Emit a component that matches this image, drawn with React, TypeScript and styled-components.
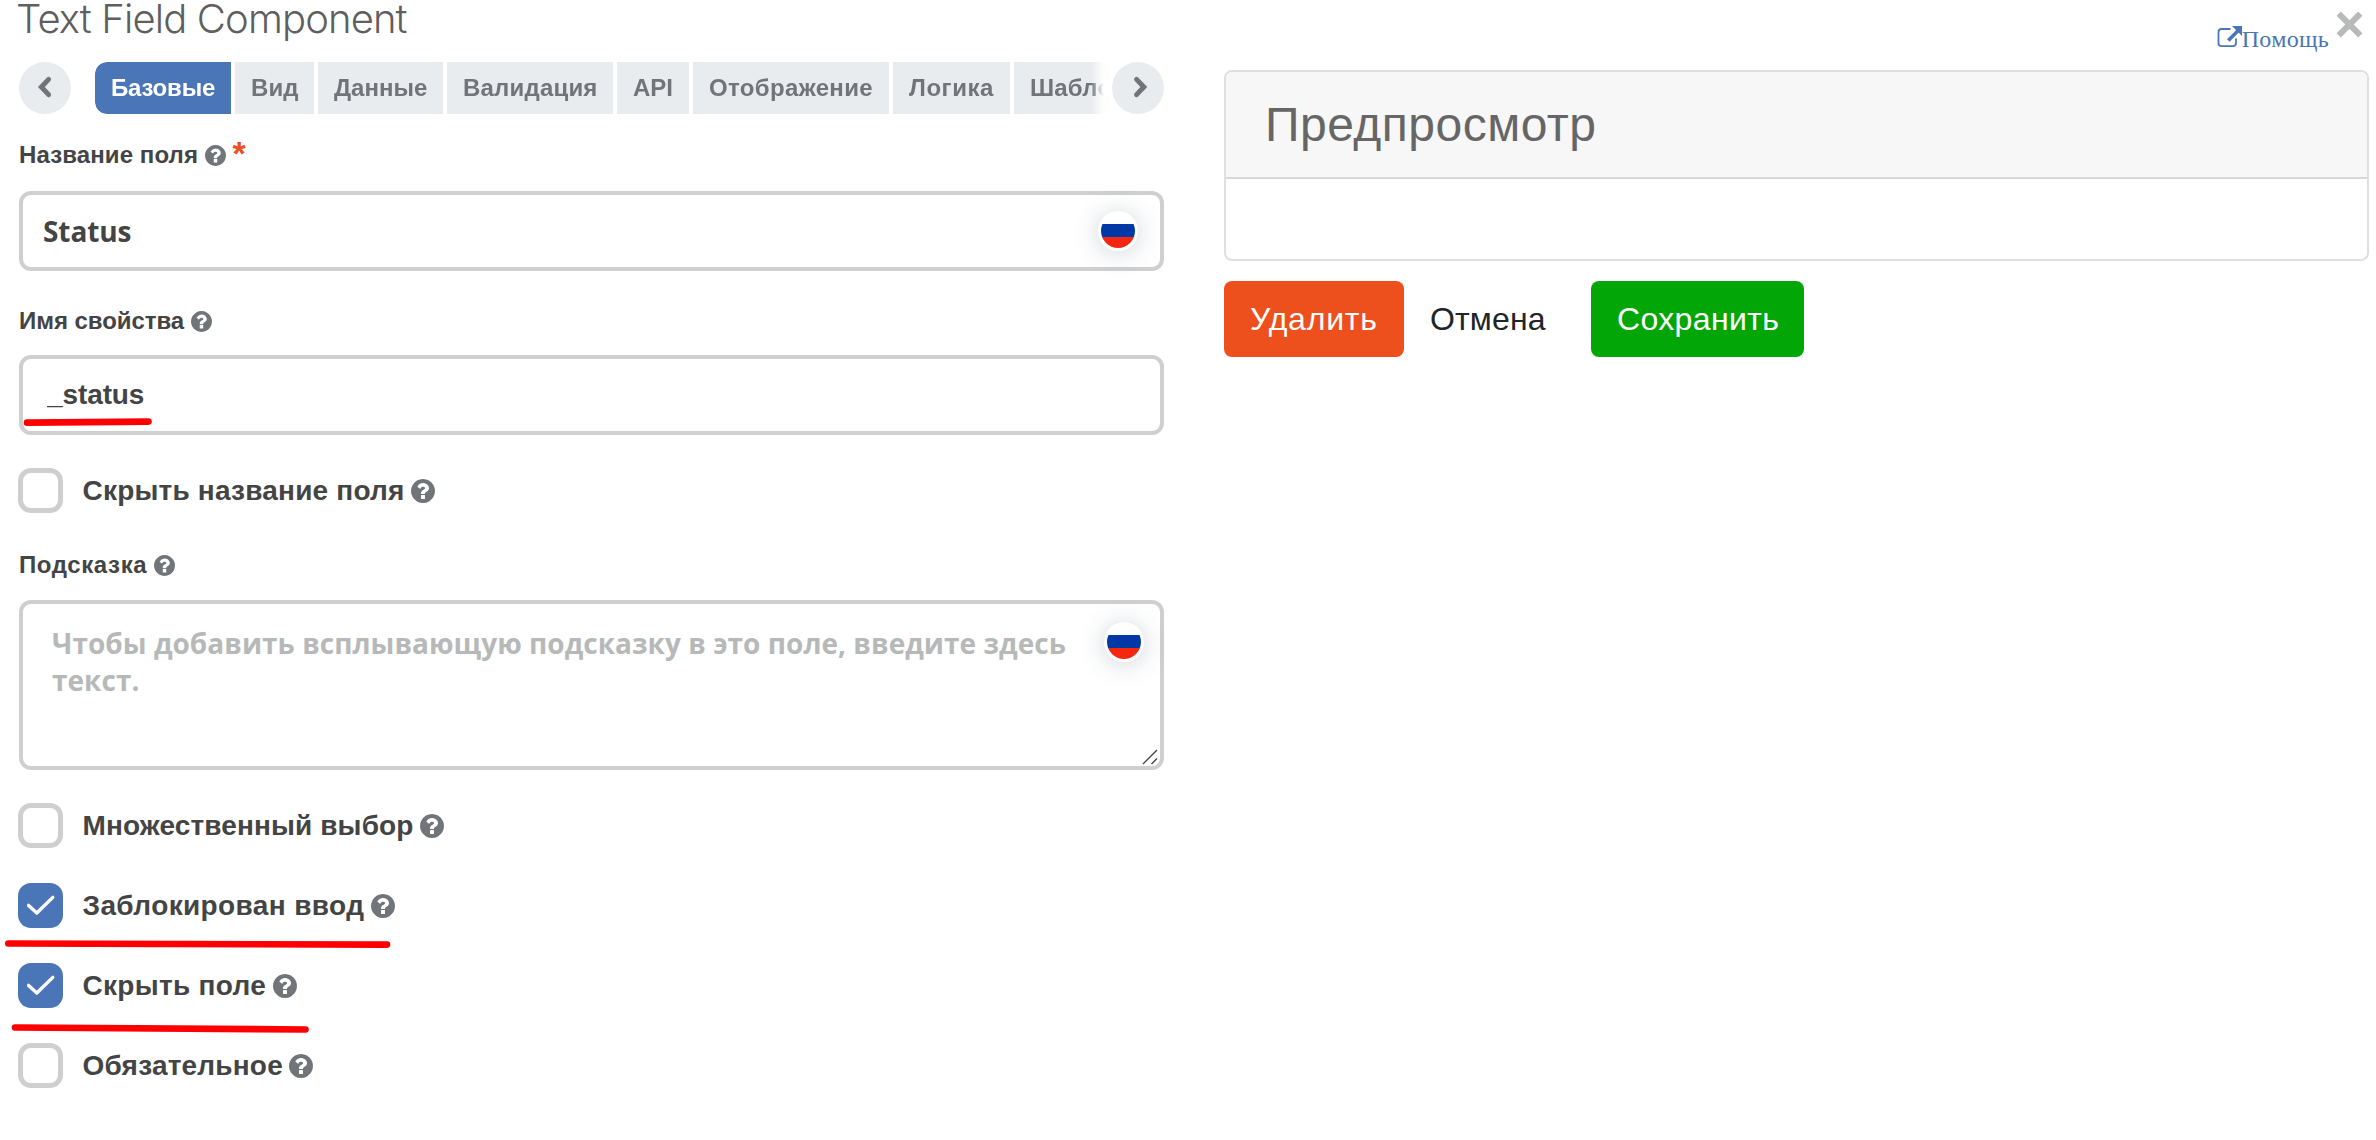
import React from 'react';
import styled, { createGlobalStyle } from 'styled-components';

const SANS = "'Liberation Sans', Arial, sans-serif";
const OPEN = "'Open Sans', 'Noto Sans', sans-serif";

const GlobalStyle = createGlobalStyle`
  *, *::before, *::after { box-sizing: border-box; }
  body {
    margin: 0;
    background: #fff;
    color: #444;
    font-family: ${SANS};
    overflow: hidden;
  }
`;

const Dialog = styled.main`
  position: relative;
  display: grid;
  grid-template-columns: 1145px 1145px;
  column-gap: 60px;
  height: 1140px;
  padding-left: 19px;
`;

const Column = styled.section`
  display: flex;
  flex-direction: column;
  min-width: 0;
`;

const Title = styled.h1`
  margin: 0 0 0 -3px;
  height: 62px;
  font: 300 40px/37px Inter, ${SANS};
  letter-spacing: -0.87px;
  color: #5f5f5f;
`;

const TabBar = styled.nav`
  display: flex;
  height: 52px;
`;

const RoundButton = styled.button`
  display: flex;
  align-items: center;
  justify-content: center;
  flex: none;
  width: 52px;
  height: 52px;
  padding: 0;
  border: 0;
  border-radius: 50%;
  background: #e9ecef;
`;

const TabStrip = styled.div`
  display: flex;
  gap: 4px;
  width: 1009px;
  margin: 0 8px 0 24px;
  overflow: hidden;
  border-radius: 12px 0 0 12px;
  mask-image: linear-gradient(to right, #000 calc(100% - 13px), transparent);
`;

const Tab = styled.button<{ $width: number; $spacing?: number; $active?: boolean }>`
  flex: none;
  width: ${(p) => p.$width}px;
  height: 52px;
  padding: 0 0 0 16px;
  border: 0;
  text-align: left;
  white-space: nowrap;
  font: bold 24px/52px ${SANS};
  letter-spacing: ${(p) => p.$spacing ?? 0}px;
  color: ${(p) => (p.$active ? '#fff' : '#717579')};
  background: ${(p) => (p.$active ? '#4a75b7' : '#e9ecef')};
`;

const FieldLabel = styled.label<{ $above: number; $below: number; $spacing?: number }>`
  display: flex;
  align-items: center;
  height: 28px;
  margin: ${(p) => p.$above}px 0 ${(p) => p.$below}px;
  font-size: 24px;
  font-weight: bold;
  line-height: 28px;
  letter-spacing: ${(p) => p.$spacing ?? 0}px;
`;

const HelpGlyph = styled.svg<{ $size: number }>`
  flex: none;
  width: ${(p) => p.$size}px;
  height: ${(p) => p.$size}px;
  margin-left: 6.5px;
  fill: #717579;
`;

const Required = styled.span`
  margin: -4px 0 0 7px;
  font-size: 34px;
  color: #eb4f1e;
`;

const Control = styled.div`
  position: relative;
  display: flex;
`;

const TextInput = styled.input<{ $font: string; $indent: number }>`
  width: 100%;
  height: 80px;
  padding: 0 80px 0 ${(p) => p.$indent}px;
  border: 4px solid #cfcfcf;
  border-radius: 12px;
  outline: 0;
  background: #fff;
  font: bold 28px ${(p) => p.$font};
  letter-spacing: -0.1px;
  color: #444;
`;

const TextArea = styled.textarea`
  width: 100%;
  height: 170px;
  padding: 21px 60px 0 29px;
  border: 4px solid #cfcfcf;
  border-radius: 12px;
  outline: 0;
  resize: none;
  overflow: hidden;
  font: bold 28px/37px ${OPEN};
  letter-spacing: 0.03px;

  &::placeholder {
    color: #b7b9b9;
    opacity: 1;
  }
`;

const ResizeGrip = styled.svg`
  position: absolute;
  right: 5px;
  bottom: 5px;
  width: 17px;
  height: 16px;
`;

const Flag = styled.span<{ $top: number; $right: number }>`
  position: absolute;
  top: ${(p) => p.$top}px;
  right: ${(p) => p.$right}px;
  width: 40px;
  height: 40px;
  padding: 3px;
  border-radius: 50%;
  background: #fff;
  box-shadow: 0 2px 24px rgba(70, 85, 105, 0.26);

  &::before {
    content: '';
    display: block;
    height: 34px;
    border-radius: 50%;
    background: linear-gradient(#fff 10px, #0039a6 10px 23.5px, #f5270e 23.5px);
  }
`;

const CheckGroup = styled.div<{ $above: number }>`
  display: flex;
  flex-direction: column;
  gap: 35px;
  margin: ${(p) => p.$above}px 0 0 -1px;
`;

const CheckRow = styled.label<{ $spacing: number }>`
  display: flex;
  align-items: center;
  height: 45px;
  font-size: 28px;
  font-weight: bold;
  line-height: 46px;
  letter-spacing: ${(p) => p.$spacing}px;
`;

const CheckBox = styled.span<{ $on?: boolean }>`
  flex: none;
  width: 45px;
  height: 45px;
  margin-right: 19.5px;
  border: ${(p) => (p.$on ? '0' : '5px solid #cfcfcf')};
  border-radius: 13px;
  background: ${(p) => (p.$on ? '#4a75b7' : '#fff')};

  svg { display: block; }
`;

const HelpRow = styled.div`
  display: flex;
  justify-content: flex-end;
  height: 70px;
  padding: 25px 40px 0 0;
`;

const HelpLink = styled.a`
  display: flex;
  height: 28px;
  font: 24px/28px 'Liberation Serif', 'Times New Roman', serif;
  letter-spacing: 0.3px;
  color: #4a75b7;
`;

const CloseButton = styled.button`
  position: absolute;
  top: 11px;
  left: 2336px;
  width: 27px;
  height: 27px;
  padding: 0;
  border: 0;
  background: none;

  svg { display: block; }
`;

const Card = styled.div`
  height: 191px;
  border: 2px solid #dfdfdf;
  border-radius: 8px;
  overflow: hidden;
`;

const CardHeader = styled.header`
  height: 107px;
  padding-left: 39px;
  border-bottom: 2px solid #d7d7d7;
  background: #f7f7f7;
`;

const CardTitle = styled.h2`
  margin: 0;
  font-size: 48px;
  font-weight: normal;
  line-height: 105px;
  letter-spacing: 0.5px;
  color: #666;
`;

const Actions = styled.div`
  display: flex;
  margin-top: 20px;
`;

const ActionButton = styled.button<{ $tone?: string; $width: number; $spacing: number }>`
  width: ${(p) => p.$width}px;
  height: 76px;
  padding: 0 0 0 26px;
  border: 0;
  border-radius: 8px;
  text-align: left;
  font: 32px/76px ${SANS};
  letter-spacing: ${(p) => p.$spacing}px;
  color: ${(p) => (p.$tone ? '#fff' : '#212529')};
  background: ${(p) => p.$tone ?? 'transparent'};

  & + & { margin-right: 21px; }
`;

const Markup = styled.svg`
  position: absolute;
  top: 0;
  left: 0;
  width: 600px;
  height: 1140px;
  pointer-events: none;
  fill: none;
  stroke: #ff0000;
  stroke-width: 6.6;
  stroke-linecap: round;
`;

const Help = ({ size = 21 }: { size?: number }) => (
  <HelpGlyph $size={size} viewBox="0 0 1536 1536">
    <path d="M896 1248v-192q0-14-9-23t-23-9h-192q-14 0-23 9t-9 23v192q0 14 9 23t23 9h192q14 0 23-9t9-23zm256-672q0-88-55.5-163t-138.5-116-170-41q-243 0-371 213-15 24 8 42l132 100q7 6 19 6 16 0 25-12 53-68 86-92 34-24 86-24 48 0 85.500 26t37.500 59q0 38-20 61t-68 45q-63 28-115.500 86.500t-52.500 125.500v36q0 14 9 23t23 9h192q14 0 23-9t9-23q0-19 21.500-49.500t54.500-49.500q32-18 49-28.500t46-35 44.500-48 28-60.500 12.500-81zm384 192q0 209-103 385.500t-279.500 279.500-385.500 103-385.500-103-279.500-279.500-103-385.500 103-385.500 279.500-279.500 385.500-103 385.500 103 279.500 279.500 103 385.500z" />
  </HelpGlyph>
);

const Chevron = ({ d }: { d: string }) => (
  <svg width="52" height="52" viewBox="0 0 52 52" fill="none" stroke="#717579" strokeWidth="5" strokeLinecap="round">
    <path d={d} />
  </svg>
);

const Check = ({ text, spacing, on }: { text: string; spacing: number; on?: boolean }) => (
  <CheckRow $spacing={spacing}>
    <CheckBox $on={on}>
      {on && (
        <svg width="45" height="45" viewBox="0 0 45 45" fill="none" stroke="#fff" strokeWidth="3.4" strokeLinecap="round" strokeLinejoin="round">
          <path d="M10.6 22.4L18.8 30L34.8 14.4" />
        </svg>
      )}
    </CheckBox>
    {text}
    <Help size={24} />
  </CheckRow>
);

const tabs = [
  { text: 'Базовые', width: 136, spacing: -0.2, active: true },
  { text: 'Вид', width: 79, spacing: 0.1 },
  { text: 'Данные', width: 125, spacing: 0 },
  { text: 'Валидация', width: 166, spacing: 0.2 },
  { text: 'API', width: 72, spacing: 0 },
  { text: 'Отображение', width: 196, spacing: 0.34 },
  { text: 'Логика', width: 117, spacing: 0.55 },
  { text: 'Шаблон', width: 130, spacing: 0.2 },
];

export default function App() {
  return (
    <>
      <GlobalStyle />
      <Dialog>
        <Column>
          <Title>Text Field Component</Title>
          <TabBar>
            <RoundButton>
              <Chevron d="M29.6 17.4L22.4 25L29.6 32.6" />
            </RoundButton>
            <TabStrip>
              {tabs.map((t) => (
                <Tab key={t.text} $width={t.width} $spacing={t.spacing} $active={t.active}>
                  {t.text}
                </Tab>
              ))}
            </TabStrip>
            <RoundButton>
              <Chevron d="M24.6 17.4L31.8 25L24.6 32.6" />
            </RoundButton>
          </TabBar>

          <FieldLabel $above={27} $below={22} $spacing={0.1}>
            Название поля
            <Help />
            <Required>*</Required>
          </FieldLabel>
          <Control>
            <TextInput $font={OPEN} $indent={20} defaultValue="Status" />
            <Flag $top={20} $right={26} />
          </Control>

          <FieldLabel $above={36} $below={20} $spacing={-0.05}>
            Имя свойства
            <Help />
          </FieldLabel>
          <Control>
            <TextInput $font={SANS} $indent={24} defaultValue="_status" />
          </Control>

          <CheckGroup $above={33}>
            <Check text="Скрыть название поля" spacing={0.2} />
          </CheckGroup>

          <FieldLabel $above={38} $below={21} $spacing={0.6}>
            Подсказка
            <Help />
          </FieldLabel>
          <Control>
            <TextArea placeholder="Чтобы добавить всплывающую подсказку в это поле, введите здесь текст." />
            <Flag $top={22} $right={20} />
            <ResizeGrip viewBox="0 0 17 16" fill="none" stroke="#444" strokeWidth="1.4">
              <path d="M1 15L15 1M9.500 15L15 9.500" />
            </ResizeGrip>
          </Control>

          <CheckGroup $above={33}>
            <Check text="Множественный выбор" spacing={0.12} />
            <Check text="Заблокирован ввод" spacing={0.38} on />
            <Check text="Скрыть поле" spacing={0.3} on />
            <Check text="Обязательное" spacing={0.2} />
          </CheckGroup>
        </Column>

        <Column>
          <HelpRow>
            <HelpLink>
              <svg width="25" height="28" viewBox="0 0 25 28" fill="none" stroke="#4a75b7">
                <path strokeWidth="1.8" d="M13.500 4H4.600Q1.500 4 1.500 7V18Q1.500 21.200 4.600 21.200H16Q19 21.200 19 18V13.500" />
                <path strokeWidth="3.6" d="M11.300 15.500L21.500 5.300" />
                <path stroke="none" fill="#4a75b7" d="M15 1H25V11Z" />
              </svg>
              Помощь
            </HelpLink>
          </HelpRow>
          <Card>
            <CardHeader>
              <CardTitle>Предпросмотр</CardTitle>
            </CardHeader>
          </Card>
          <Actions>
            <ActionButton $tone="#ed4f1d" $width={180} $spacing={0.8}>Удалить</ActionButton>
            <ActionButton $width={166} $spacing={0.15}>Отмена</ActionButton>
            <ActionButton $tone="#02a606" $width={213} $spacing={0.35}>Сохранить</ActionButton>
          </Actions>
        </Column>

        <CloseButton>
          <svg width="27" height="27" viewBox="0 0 27 27" stroke="#b8baba" strokeWidth="6">
            <path d="M2.700 2.700L24.300 24.300M24.300 2.700L2.700 24.300" />
          </svg>
        </CloseButton>

        <Markup viewBox="0 0 600 1140">
          <path d="M27 422.600L148.500 421.600" />
          <path d="M8.300 943.500L387 944.600" />
          <path d="M15 1027.500L305.500 1029.500" />
        </Markup>
      </Dialog>
    </>
  );
}
